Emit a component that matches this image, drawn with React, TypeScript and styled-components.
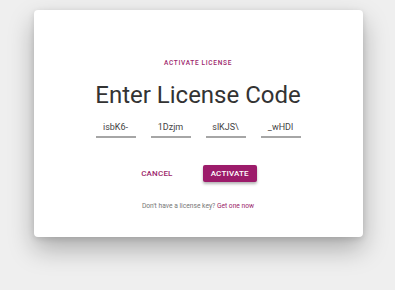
import React from "react";
import styled, { createGlobalStyle } from "styled-components";

const Global = createGlobalStyle`
  html, body {
    margin: 0;
    padding: 0;
    background: #efefef;
    font-family: Roboto, "Liberation Sans", sans-serif;
  }
`;

const Page = styled.div`
  width: 395px;
  height: 290px;
  padding-top: 10px;
  box-sizing: border-box;
  display: flex;
  justify-content: center;
  align-items: flex-start;
`;

const Card = styled.div`
  width: 329px;
  height: 227px;
  margin-left: 1px;
  background: #fff;
  border-radius: 4px;
  box-shadow: 0 12px 26px rgba(0, 0, 0, 0.28), 0 2px 6px rgba(0, 0, 0, 0.12);
  display: flex;
  flex-direction: column;
  align-items: center;
  padding-top: 49px;
  box-sizing: border-box;
`;

const Eyebrow = styled.div`
  font-size: 6.5px;
  font-weight: 500;
  letter-spacing: 0.7px;
  color: #9c1f6b;
  line-height: 8px;
`;

const Title = styled.h1`
  margin: 14px 0 0;
  font-size: 24px;
  font-weight: 400;
  color: #333;
  line-height: 28px;
`;

const Codes = styled.div`
  display: flex;
  gap: 15px;
  margin-top: 13px;
`;

const CodeInput = styled.input`
  width: 40px;
  border: none;
  border-bottom: 2px solid #a6a6a6;
  padding: 0 0 4px;
  font: 400 9px Roboto, "Liberation Sans", sans-serif;
  color: #444;
  text-align: center;
  background: transparent;
  outline: none;
`;

const Actions = styled.div`
  display: flex;
  align-items: center;
  gap: 30px;
  margin-top: 27px;
  margin-left: 2px;
`;

const TextButton = styled.button`
  border: none;
  background: none;
  padding: 0;
  font: 500 8px Roboto, "Liberation Sans", sans-serif;
  letter-spacing: 0.2px;
  color: #9c1f6b;
  cursor: pointer;
`;

const PrimaryButton = styled(TextButton)`
  background: #9c1b6a;
  color: #fff;
  height: 17px;
  padding: 0 8px;
  border-radius: 2px;
  box-shadow: 0 2px 3px rgba(0, 0, 0, 0.3);
`;

const Footer = styled.p`
  margin: 20px 0 0;
  font-size: 6.7px;
  color: #777;
`;

const Link = styled.a`
  color: #9c1f6b;
  text-decoration: none;
`;

const codes = ["isbK6-", "1Dzjm", "slKJS\\", "_wHDl"];

export default function App() {
  return (
    <>
      <Global />
      <Page>
        <Card>
          <Eyebrow>ACTIVATE LICENSE</Eyebrow>
          <Title>Enter License Code</Title>
          <Codes>
            {codes.map((c, i) => (
              <CodeInput key={i} defaultValue={c} />
            ))}
          </Codes>
          <Actions>
            <TextButton>CANCEL</TextButton>
            <PrimaryButton>ACTIVATE</PrimaryButton>
          </Actions>
          <Footer>
            Don't have a license key? <Link href="#">Get one now</Link>
          </Footer>
        </Card>
      </Page>
    </>
  );
}
